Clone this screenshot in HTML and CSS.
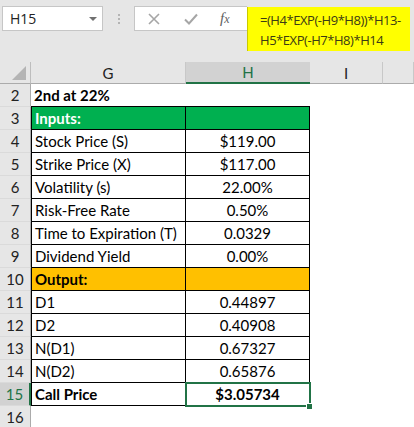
FILE: index.html
```html
<!DOCTYPE html>
<html>
<head>
<meta charset="utf-8">
<link rel="stylesheet" href="styles.css">
</head>
<body>
<div class="app">
  <div class="toolbar">
    <div class="namebox"><span class="ref">H15</span><span class="caret"></span></div>
    <div class="dots"><i></i><i></i><i></i></div>
    <div class="fbar">
      <div class="fbtns">
        <svg class="ico" width="12" height="12" viewBox="0 0 12 12"><path d="M1 1L11 11M11 1L1 11" stroke="#a6a6a6" stroke-width="1.6" fill="none"/></svg>
        <svg class="ico" width="14" height="12" viewBox="0 0 14 12"><path d="M1 6.5L5 10.5L13 1.5" stroke="#a6a6a6" stroke-width="2" fill="none"/></svg>
        <span class="fx">f<span class="fxx">x</span></span>
      </div>
      <div class="formula">=(H4*EXP(-H9*H8))*H13-<br>H5*EXP(-H7*H8)*H14</div>
    </div>
  </div>
  <div class="sheet">
    <div class="corner"><span class="tri"></span></div>
    <div class="ch">G</div>
    <div class="ch sel">H</div>
    <div class="ch">I</div>
    <div class="ch"></div>

    <div class="rh">2</div><div class="c b2 bold">2nd at 22%</div><div class="c b2"></div><div class="c"></div><div class="c"></div>
    <div class="rh">3</div><div class="c g green bold">Inputs:</div><div class="c h green"></div><div class="c"></div><div class="c"></div>
    <div class="rh">4</div><div class="c g">Stock Price (S)</div><div class="c h">$119.00</div><div class="c"></div><div class="c"></div>
    <div class="rh">5</div><div class="c g">Strike Price (X)</div><div class="c h">$117.00</div><div class="c"></div><div class="c"></div>
    <div class="rh">6</div><div class="c g">Volatility (s)</div><div class="c h">22.00%</div><div class="c"></div><div class="c"></div>
    <div class="rh">7</div><div class="c g">Risk-Free Rate</div><div class="c h">0.50%</div><div class="c"></div><div class="c"></div>
    <div class="rh">8</div><div class="c g">Time to Expiration (T)</div><div class="c h">0.0329</div><div class="c"></div><div class="c"></div>
    <div class="rh">9</div><div class="c g">Dividend Yield</div><div class="c h">0.00%</div><div class="c"></div><div class="c"></div>
    <div class="rh">10</div><div class="c g orange bold">Output:</div><div class="c h orange"></div><div class="c"></div><div class="c"></div>
    <div class="rh">11</div><div class="c g">D1</div><div class="c h">0.44897</div><div class="c"></div><div class="c"></div>
    <div class="rh">12</div><div class="c g">D2</div><div class="c h">0.40908</div><div class="c"></div><div class="c"></div>
    <div class="rh">13</div><div class="c g">N(D1)</div><div class="c h">0.67327</div><div class="c"></div><div class="c"></div>
    <div class="rh">14</div><div class="c g">N(D2)</div><div class="c h">0.65876</div><div class="c"></div><div class="c"></div>
    <div class="rh rsel">15</div><div class="c g bold">Call Price</div><div class="c h bold active">$3.05734</div><div class="c"></div><div class="c"></div>
    <div class="rh">16</div><div class="c"></div><div class="c"></div><div class="c"></div><div class="c"></div>
  </div>
</div>
</body>
</html>
```
FILE: styles.css
```css
html, body {
  margin: 0;
  padding: 0;
  background: #ffffff;
}
.app {
  width: 414px;
  height: 427px;
  overflow: hidden;
  font-family: Lato, "Liberation Sans", sans-serif;
}
.toolbar {
  height: 62px;
  background: #e6e6e6;
  display: flex;
  align-items: flex-start;
  padding-top: 6px;
  box-sizing: border-box;
}
.namebox {
  margin-left: 2px;
  width: 101px;
  height: 25px;
  box-sizing: border-box;
  background: #fff;
  border: 1px solid #c6c6c6;
  display: flex;
  align-items: center;
  justify-content: space-between;
  padding: 0 5px 0 7px;
  font-family: "Open Sans", "Noto Sans", sans-serif;
  font-size: 14px;
  color: #222;
}
.caret {
  width: 0;
  height: 0;
  border-left: 4px solid transparent;
  border-right: 4px solid transparent;
  border-top: 4px solid #707070;
  margin-top: 1px;
}
.dots {
  width: 31px;
  height: 25px;
  display: flex;
  flex-direction: column;
  align-items: center;
  justify-content: center;
  gap: 2px;
}
.dots i {
  display: block;
  width: 2px;
  height: 2px;
  background: #b4b4b4;
}
.fbar {
  display: flex;
  align-items: flex-start;
}
.fbtns {
  width: 113px;
  height: 25px;
  box-sizing: border-box;
  background: #fff;
  border: 1px solid #c6c6c6;
  border-right: none;
  display: flex;
  align-items: center;
  padding-left: 13px;
}
.fbtns .ico {
  display: block;
}
.fbtns .ico + .ico {
  margin-left: 24px;
}
.fx {
  margin-left: 22px;
  font-family: "Liberation Serif", serif;
  font-style: italic;
  font-size: 15px;
  color: #606060;
}
.fxx {
  font-size: 12px;
}
.formula {
  width: 163px;
  height: 44px;
  margin-top: 1px;
  box-sizing: border-box;
  background: #ffff00;
  border-left: 1px solid #c9c900;
  padding: 3px 0 0 12px;
  font-family: "Open Sans", "Noto Sans", sans-serif;
  font-size: 13px;
  letter-spacing: -0.45px;
  line-height: 20px;
  color: #3b3b14;
  white-space: nowrap;
  overflow: hidden;
}
.sheet {
  display: grid;
  grid-template-columns: 31px 155px 124px 73px 31px;
  grid-template-rows: 22px;
  grid-auto-rows: 23px;
  font-size: 15px;
  color: #000;
}
.sheet > div {
  box-sizing: border-box;
  display: flex;
  align-items: center;
  white-space: nowrap;
  overflow: hidden;
}
.corner {
  background: #e6e6e6;
  border-right: 1px solid #bdbdbd;
  border-bottom: 1px solid #ababab;
  position: relative;
}
.tri {
  position: absolute;
  right: 4px;
  bottom: 3px;
  width: 0;
  height: 0;
  border-left: 14px solid transparent;
  border-bottom: 14px solid #b4b4b4;
}
.ch {
  background: #e6e6e6;
  border-right: 1px solid #c8c8c8;
  border-bottom: 1px solid #ababab;
  justify-content: center;
  color: #222;
}
.ch.sel {
  background: #d2d2d2;
  border-bottom: 2px solid #217346;
  color: #217346;
  border-right: none;
}
.rh {
  background: #e6e6e6;
  border-right: 1px solid #ababab;
  border-bottom: 1px solid #dadada;
  justify-content: center;
  color: #222;
}
.rh.rsel {
  background: #d2d2d2;
  color: #217346;
  border-right: 2px solid #217346;
}
.c {
  background: #fff;
  padding-left: 3px;
}
.b2 {
  border-bottom: 1px solid #000;
}
.g {
  border-left: 1px solid #000;
  border-right: 1px solid #000;
  border-bottom: 1px solid #000;
}
.h {
  border-right: 1px solid #000;
  border-bottom: 1px solid #000;
  justify-content: center;
  padding-left: 0;
}
.bold {
  font-weight: 700;
}
.green {
  background: #00b050;
  color: #fff;
}
.orange {
  background: #ffc000;
  color: #000;
}
.sheet > .active {
  overflow: visible;
  position: relative;
  outline: 2px solid #217346;
  outline-offset: -1px;
}
.active::after {
  content: "";
  position: absolute;
  right: -4px;
  bottom: -5px;
  width: 5px;
  height: 5px;
  background: #217346;
  border: 1px solid #fff;
}
```
